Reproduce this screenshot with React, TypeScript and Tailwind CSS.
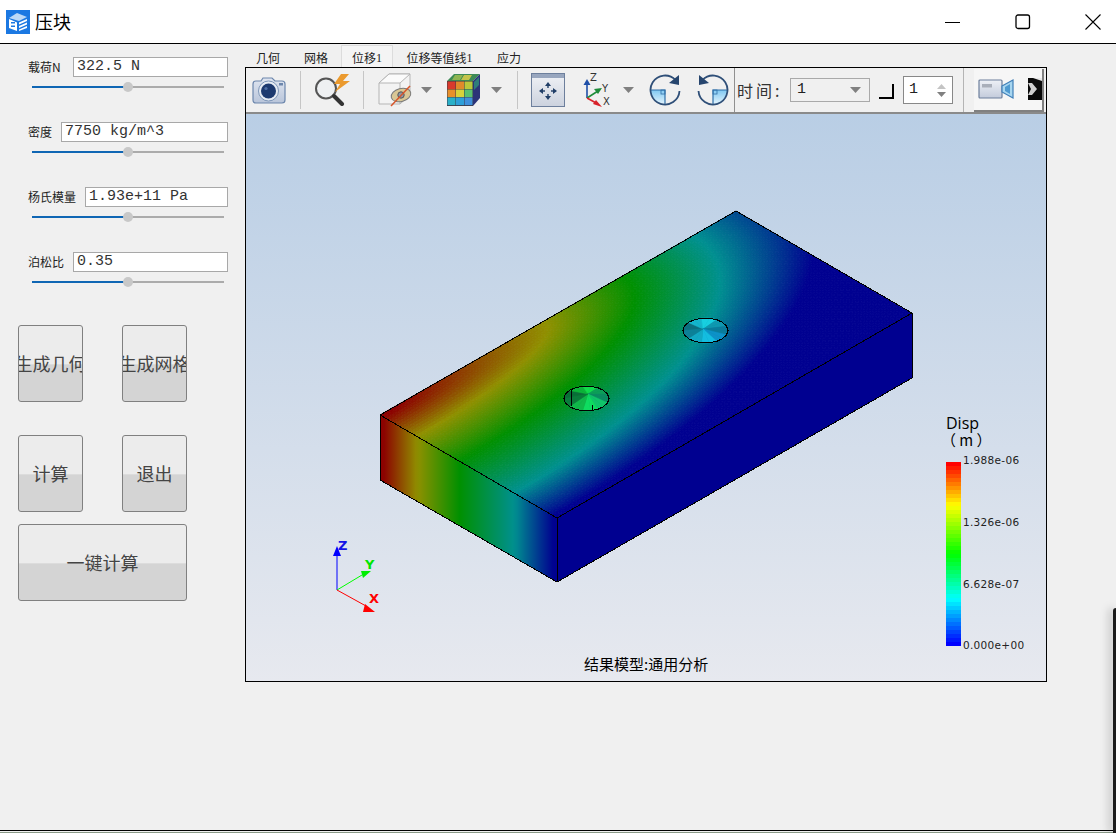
const SANS = "[font-family:'Noto_Sans_CJK_SC','Liberation_Sans',sans-serif]";

const fields = [
  { label: "载荷N", labelW: "w-[45px]", value: "322.5 N" },
  { label: "密度", labelW: "w-[33px]", value: "7750 kg/m^3" },
  { label: "杨氏模量", labelW: "w-[57px]", value: "1.93e+11 Pa" },
  { label: "泊松比", labelW: "w-[45px]", value: "0.35" },
];

const tabs = [
  { name: "几何", cls: "ml-[11px] w-[24px]" },
  { name: "网格", cls: "ml-[24px] w-[24px]" },
  { name: "位移", num: "1", active: true, cls: "ml-[13px] w-[52px]" },
  { name: "位移等值线", num: "1", cls: "ml-[14px] w-[65px]" },
  { name: "应力", cls: "ml-[25px] w-[24px]" },
];

// color ramp of the result plot, dark rainbow
const RAMP = [
  [140, 0, 0],
  [144, 144, 0],
  [0, 144, 0],
  [0, 144, 144],
  [0, 0, 144],
];
const AX = [0.05, 0.46, 0.68, 0.88, 1.12];
const BX = [0.02, 0.21, 0.45, 0.76, 0.98];

const mix = (arr: number[], t: number) => {
  const i = Math.min(Math.floor(t), arr.length - 2);
  return arr[i] + (arr[i + 1] - arr[i]) * (t - i);
};

const radius = (u: number, v: number, t: number) =>
  Math.hypot(u / mix(AX, t), v / mix(BX, t));

const fieldAt = (u: number, v: number) => {
  if (radius(u, v, 4) > 1) return 4;
  if (radius(u, v, 0) < 1) return 0;
  let lo = 0;
  let hi = 4;
  for (let i = 0; i < 14; i++) {
    const m = (lo + hi) / 2;
    if (radius(u, v, m) > 1) lo = m;
    else hi = m;
  }
  return lo;
};

const rampColor = (t: number) => {
  const i = Math.min(Math.floor(t), 3);
  const f = t - i;
  const c = RAMP[i].map((a, k) => Math.round(a + (RAMP[i + 1][k] - a) * f));
  return `rgb(${c[0]},${c[1]},${c[2]})`;
};

const legendColor = (p: number) => {
  const stops: [number, number[]][] = [
    [0, [255, 0, 0]],
    [0.23, [255, 255, 0]],
    [0.5, [0, 255, 0]],
    [0.75, [0, 255, 255]],
    [1, [0, 0, 255]],
  ];
  let i = 0;
  while (i < 3 && p > stops[i + 1][0]) i++;
  const f = (p - stops[i][0]) / (stops[i + 1][0] - stops[i][0]);
  const c = stops[i][1].map((a, k) => Math.round(a + (stops[i + 1][1][k] - a) * f));
  return `rgb(${c[0]},${c[1]},${c[2]})`;
};

const ring = (cx: number, cy: number) =>
  Array.from({ length: 18 }, (_, k) => {
    const a = Math.PI + (k * Math.PI) / 9;
    return [Math.round((cx + 22.5 * Math.cos(a)) * 10) / 10, Math.round((cy + 12.5 * Math.sin(a)) * 10) / 10];
  });

function Plate() {
  const cols = 120;
  const rows = 60;
  const pt = (u: number, v: number) => [380 + 356 * u + 177 * v, 415 - 204 * u + 103 * v];
  const cells = [];
  for (let i = 0; i < cols; i++) {
    for (let j = 0; j < rows; j++) {
      const u0 = i / cols;
      const u1 = (i + 1) / cols;
      const v0 = j / rows;
      const v1 = (j + 1) / rows;
      const color = rampColor(fieldAt((u0 + u1) / 2, (v0 + v1) / 2));
      const p = [pt(u0, v0), pt(u1, v0), pt(u1, v1), pt(u0, v1)].map((q) => q.join(",")).join(" ");
      cells.push(<polygon key={`${i}-${j}`} points={p} fill={color} stroke={color} strokeWidth="0.8" />);
    }
  }
  const sideStops = Array.from({ length: 41 }, (_, k) => (
    <stop key={k} offset={k / 40} stopColor={rampColor(fieldAt(0, k / 40))} />
  ));
  const fan = (pts: number[][], apex: number[], colors: string[]) =>
    pts.map((q, i) => {
      const n = pts[(i + 1) % pts.length];
      const c = colors[Math.floor(i / 2)];
      return (
        <polygon
          key={i}
          points={`${q[0]},${q[1]} ${n[0]},${n[1]} ${apex[0]},${apex[1]}`}
          fill={c}
          stroke={c}
          strokeWidth="0.5"
        />
      );
    });
  const hole1 = ring(586.5, 398.5);
  const hole2 = ring(705.5, 330.5);
  return (
    <svg viewBox="246 114 800 567" className="absolute inset-0 h-full w-full">
      <defs>
        <linearGradient id="sideFace" gradientUnits="userSpaceOnUse" x1="380" y1="0" x2="557" y2="0">
          {sideStops}
        </linearGradient>
      </defs>
      {cells}
      <polygon points="380,415 557,518 557,582 380,480" fill="url(#sideFace)" />
      <polygon points="557,518 912,313 912,378 557,582" fill="#000090" shapeRendering="crispEdges" />
      {fan(hole1, [588, 394], ["#0a6e38", "#0cb43a", "#12dc4c", "#0d9f58", "#0b8c62", "#10c46a", "#0fdc60", "#10b84a", "#0b7c3c"])}
      {fan(hole2, [703, 329], ["#0c6f80", "#14b4cc", "#18cfe0", "#0f98b0", "#0a7c9c", "#0d92c8", "#14bde0", "#12a8c4", "#0d8098"])}
      <g fill="none" stroke="#000" strokeWidth="1" shapeRendering="crispEdges">
        <polygon points="380,415 736,211 912,313 557,518" />
        <polyline points="380,415 380,480 557,582 912,378 912,313" />
        <line x1="557" y1="518" x2="557" y2="582" />
        <polygon points={hole1.map((q) => q.join(",")).join(" ")} />
        <polygon points={hole2.map((q) => q.join(",")).join(" ")} />
        <line x1="571" y1="389" x2="571" y2="406" />
        <line x1="592" y1="405" x2="592" y2="411" />
      </g>
      {/* axis triad */}
      <line x1="337" y1="590" x2="337" y2="552" stroke="#0000ff" strokeWidth="1" />
      <polygon points="337,546 333,556 341,556" fill="#0000ff" />
      <line x1="337" y1="590" x2="362" y2="575" stroke="#00ff00" strokeWidth="1" />
      <polygon points="371,571 361,571 363,578" fill="#00ee00" />
      <line x1="337" y1="590" x2="366" y2="606" stroke="#ff0000" strokeWidth="1" />
      <polygon points="375,612 365,604 363,612" fill="#ff0000" />
      <text x="338" y="550" fill="#1414e6" fontSize="13" fontWeight="700" fontFamily="'DejaVu Sans',sans-serif">Z</text>
      <text x="365" y="569" fill="#00e600" fontSize="13" fontWeight="700" fontFamily="'DejaVu Sans',sans-serif">Y</text>
      <text x="369" y="603" fill="#ff0000" fontSize="13" fontWeight="700" fontFamily="'DejaVu Sans',sans-serif">X</text>
    </svg>
  );
}

function Sep({ className = "" }: { className?: string }) {
  return <div className={`h-[38px] w-px bg-[#c6c6c6] ${className}`} />;
}

function Caret({ className = "" }: { className?: string }) {
  return (
    <svg width="11" height="6" viewBox="0 0 11 6" className={className}>
      <polygon points="0,0 11,0 5.5,6" fill="#808080" />
    </svg>
  );
}

function CameraIcon() {
  return (
    <svg width="34" height="28" viewBox="0 0 34 28" className="ml-[6px]">
      <defs>
        <linearGradient id="cam" x1="0" y1="0" x2="0" y2="1">
          <stop offset="0" stopColor="#dfe5f0" />
          <stop offset="1" stopColor="#b9c5da" />
        </linearGradient>
      </defs>
      <path d="M1 8q0-3 3-3h5l2-3h9l3 3h7q3 0 3 3v16q0 3-3 3H4q-3 0-3-3z" fill="url(#cam)" stroke="#6c86ac" strokeWidth="1.2" />
      <rect x="27" y="7" width="4" height="2.5" fill="#6c86ac" />
      <circle cx="16.5" cy="15" r="10" fill="#e6ebf3" stroke="#7f97b8" />
      <circle cx="16.5" cy="15" r="7.5" fill="#1d3a70" />
      <circle cx="14" cy="12.5" r="1.6" fill="#4e6ea4" />
    </svg>
  );
}

function ZoomIcon() {
  return (
    <svg width="36" height="32" viewBox="0 0 36 32" className="ml-[14px]">
      <circle cx="11" cy="14.5" r="10" fill="#eef0f2" stroke="#555" strokeWidth="2" />
      <line x1="19" y1="22" x2="27" y2="30" stroke="#333" strokeWidth="4" strokeLinecap="round" />
      <polygon points="26,0 19,10 25,10 20,18 35,7 28,7 34,0" fill="#eb9a2e" />
    </svg>
  );
}

function BoxIcon() {
  return (
    <svg width="34" height="35" viewBox="0 0 34 35" className="ml-[14px]">
      <polygon points="1,10 11,1 32,1 32,22 22,31 1,31" fill="#f3f3f3" stroke="#b5b5b5" />
      <polygon points="1,10 11,1 32,1 22,10" fill="#fbfbfb" stroke="#b5b5b5" />
      <line x1="22" y1="10" x2="22" y2="31" stroke="#b5b5b5" />
      <ellipse cx="23" cy="22" rx="10" ry="6.5" fill="#d9c795" stroke="#7a7a7a" transform="rotate(-15 23 22)" />
      <circle cx="23" cy="22" r="3.2" fill="#8d99a8" stroke="#555" />
      <line x1="13" y1="33" x2="32" y2="13" stroke="#d8562a" strokeWidth="1.5" />
    </svg>
  );
}

function CubeIcon() {
  const front = ["#d93a2c", "#e08a2a", "#b9c83a", "#e8902a", "#d8d23a", "#58c070", "#2ab0c8", "#2e9fd8", "#3f8fdc"];
  return (
    <svg width="33" height="32" viewBox="0 0 33 32" className="ml-[15px]">
      <polygon points="0,7 7,0 33,0 26,7" fill="#3d8a55" />
      <polygon points="8,1 16,1 13,6 5,6" fill="#8fb552" />
      <polygon points="17,1 25,1 22,6 14,6" fill="#c4c44c" />
      <polygon points="26,7 33,0 33,24 26,32" fill="#2c3478" />
      <polygon points="27,8 32,3 32,11 27,16" fill="#2f7d7a" />
      <rect x="0" y="7" width="26" height="25" fill="#3b3b4a" />
      {front.map((c, i) => (
        <rect key={i} x={0.5 + (i % 3) * 8.5} y={7.5 + Math.floor(i / 3) * 8} width="8" height="7.6" fill={c} />
      ))}
    </svg>
  );
}

function FitIcon() {
  return (
    <svg width="34" height="34" viewBox="0 0 34 34" className="ml-[13px]">
      <defs>
        <linearGradient id="fit" x1="0" y1="0" x2="0" y2="1">
          <stop offset="0" stopColor="#f0f2f6" />
          <stop offset="1" stopColor="#ccd2de" />
        </linearGradient>
      </defs>
      <rect x="0.5" y="0.5" width="33" height="33" fill="url(#fit)" stroke="#6d7f9c" />
      <rect x="1" y="1" width="32" height="4" fill="#98a6be" />
      <g stroke="#1f3d66" strokeWidth="1.4">
        <line x1="17" y1="11" x2="17" y2="15" />
        <line x1="17" y1="21" x2="17" y2="25" />
        <line x1="10" y1="18" x2="14" y2="18" />
        <line x1="20" y1="18" x2="24" y2="18" />
      </g>
      <g fill="#1f3d66">
        <polygon points="17,9 14,13 20,13" />
        <polygon points="17,27 14,23 20,23" />
        <polygon points="8,18 12,15 12,21" />
        <polygon points="26,18 22,15 22,21" />
      </g>
    </svg>
  );
}

function AxesIcon() {
  return (
    <svg width="30" height="36" viewBox="0 0 30 36" className="ml-[18px]">
      <line x1="4" y1="26" x2="4" y2="12" stroke="#1f4fa8" strokeWidth="1.6" />
      <polygon points="4,7 0.5,13 7.5,13" fill="#1f4fa8" />
      <line x1="4" y1="26" x2="15" y2="19" stroke="#1e8c3a" strokeWidth="1.6" />
      <polygon points="19,16 11,17 15,22" fill="#1e8c3a" />
      <line x1="4" y1="26" x2="15" y2="32" stroke="#d8222a" strokeWidth="1.6" />
      <polygon points="19,35 10,32 13,28" fill="#d8222a" />
      <g fill="#333" fontSize="10" fontFamily="'DejaVu Sans',sans-serif">
        <text x="7" y="9">Z</text>
        <text x="19" y="20">Y</text>
        <text x="20" y="33">X</text>
      </g>
    </svg>
  );
}

function RotateIcon({ flip, className = "" }: { flip?: boolean; className?: string }) {
  return (
    <svg width="32" height="32" viewBox="0 0 32 32" className={`${flip ? "-scale-x-100" : ""} ${className}`}>
      <defs>
        <linearGradient id="rot" x1="0" y1="0" x2="0" y2="1">
          <stop offset="0" stopColor="#7fc8f2" />
          <stop offset="1" stopColor="#e6f5fd" />
        </linearGradient>
      </defs>
      <path d="M16 16H1.5A14.5 14.5 0 0 0 16 30.5z" fill="url(#rot)" />
      <path d="M1.5 16H16V30" fill="none" stroke="#2f6fa8" strokeWidth="1.2" />
      <rect x="12" y="16" width="4" height="4" fill="none" stroke="#2f6fa8" strokeWidth="0.8" />
      <path d="M26.5 6A14.5 14.5 0 1 0 30.5 17" fill="none" stroke="#2f4f78" strokeWidth="1.8" />
      <polygon points="30,1 30,11 20,9" fill="#26456e" />
    </svg>
  );
}

function VideoIcon() {
  return (
    <svg width="36" height="20" viewBox="0 0 36 20">
      <defs>
        <linearGradient id="vid" x1="0" y1="0" x2="0" y2="1">
          <stop offset="0" stopColor="#eef1f6" />
          <stop offset="1" stopColor="#c3cbdb" />
        </linearGradient>
      </defs>
      <rect x="1" y="1" width="23" height="18" rx="1" fill="url(#vid)" stroke="#6d7f9c" strokeWidth="1.2" />
      <rect x="4" y="5" width="10" height="3.5" fill="#a9afba" />
      <polygon points="24,7 35,1 35,19 24,13" fill="#a8d6f0" stroke="#3f7fb8" strokeWidth="1.2" />
      <polygon points="27,8 32,5 32,15 27,12" fill="#4f9ad0" />
    </svg>
  );
}

function ChevronBlock() {
  return (
    <svg width="14" height="22" viewBox="0 0 14 22" className="ml-[14px] blur-[0.5px]">
      <rect width="14" height="22" fill="#0a0a0a" />
      <polygon points="5,0 14,0 14,3" fill="#e8e8e8" />
      <polygon points="0,5 4,5 9,11 4,17 0,17 3,11" fill="#cfcfcf" />
    </svg>
  );
}

function Logo() {
  return (
    <svg width="24" height="24" viewBox="0 0 24 24" className="ml-[6px]">
      <rect width="24" height="24" fill="#1b78e2" />
      <polygon points="3,8 11,3 21,7 13,11" fill="#bcd9f7" />
      <polygon points="3,9 11,12.5 11,21 3,18" fill="#ffffff" />
      <rect x="5" y="12" width="4" height="1.5" fill="#1b78e2" />
      <rect x="5" y="15.5" width="4" height="1.5" fill="#1b78e2" />
      <polygon points="13,12.5 21,9 21,11 13,14.5" fill="#ffffff" />
      <polygon points="13,16 21,12.5 21,14.5 13,18" fill="#ffffff" />
      <polygon points="13,19.5 21,16 21,18 13,21" fill="#ffffff" />
    </svg>
  );
}

function SimButton({ text, className = "w-[65px]" }: { text: string; className?: string }) {
  return (
    <button
      className={`flex h-[77px] items-center justify-center overflow-hidden whitespace-nowrap rounded-[3px] border border-[#808080] bg-[linear-gradient(to_bottom,#ececec_0%,#ececec_50%,#d4d4d4_52%,#d4d4d4_100%)] text-[18px] text-[#444] ${className}`}
    >
      {text}
    </button>
  );
}

export default function App() {
  const legend = Array.from({ length: 46 }, (_, i) => legendColor(i / 45));
  return (
    <div className={`relative h-[833px] w-[1116px] overflow-hidden bg-[#f0f0f0] ${SANS}`}>
      <header className="flex h-[44px] items-center border-b border-black bg-white">
        <Logo />
        <span className="ml-[5px] text-[18px] text-black">压块</span>
        <svg width="16" height="16" viewBox="0 0 16 16" className="ml-[874px]">
          <line x1="0" y1="8.5" x2="15" y2="8.5" stroke="#000" />
        </svg>
        <svg width="16" height="16" viewBox="0 0 16 16" className="ml-[54px]">
          <rect x="1" y="1" width="13.5" height="13.5" rx="2" fill="none" stroke="#000" strokeWidth="1.3" />
        </svg>
        <svg width="16" height="16" viewBox="0 0 16 16" className="ml-[54px]">
          <path d="M0.5 0.5L15.5 15.5M15.5 0.5L0.5 15.5" stroke="#000" strokeWidth="1.1" />
        </svg>
      </header>

      <div className="flex">
        <aside className="w-[245px] shrink-0 pt-[13px]">
          {fields.map((f) => (
            <div key={f.label} className="mb-[30px] pl-[28px]">
              <div className="flex h-[20px] w-[200px] items-center">
                <span className={`text-[12px] text-[#222] ${f.labelW}`}>{f.label}</span>
                <div className="flex h-[20px] flex-1 items-center border border-[#a8a8a8] bg-white pl-[3px] [font-family:'Liberation_Mono','Noto_Sans_CJK_SC',monospace] text-[15px] text-[#333]">
                  {f.value}
                </div>
              </div>
              <div className="relative ml-[4px] mt-[5px] flex h-[10px] w-[192px] items-center">
                <div className="h-[2px] w-[96px] bg-[#0f66b4]" />
                <div className="h-[2px] w-[96px] bg-[#ababab]" />
                <div className="absolute left-[91px] top-0 h-[10px] w-[10px] rounded-full bg-[#c8c8c8]" />
              </div>
            </div>
          ))}

          <div className="pl-[18px] pt-[8px]">
            <div className="flex gap-[39px]">
              <SimButton text="生成几何" />
              <SimButton text="生成网格" />
            </div>
            <div className="mt-[33px] flex gap-[39px]">
              <SimButton text="计算" />
              <SimButton text="退出" />
            </div>
            <SimButton text="一键计算" className="mt-[12px] w-[169px]" />
          </div>
        </aside>

        <main className="w-[802px]">
          <nav className="flex h-[23px] items-end text-[12px] text-[#222]">
            {tabs.map((t) => (
              <div
                key={t.name}
                className={`flex h-[22px] items-center justify-center whitespace-nowrap pt-[3px] ${t.cls} ${
                  t.active ? "border-x border-t border-[#dcdcdc] bg-[#f4f4f4]" : ""
                }`}
              >
                {t.name}
                {t.num && <span className="[font-family:'Liberation_Serif',serif]">{t.num}</span>}
              </div>
            ))}
          </nav>

          <section className="h-[615px] border border-black">
            <div className="flex h-[46px] items-center border-b-2 border-[#8a8a8a]">
              <CameraIcon />
              <Sep className="ml-[14px]" />
              <ZoomIcon />
              <Sep className="ml-[12px]" />
              <BoxIcon />
              <Caret className="ml-[9px]" />
              <CubeIcon />
              <Caret className="ml-[11px]" />
              <Sep className="ml-[15px]" />
              <FitIcon />
              <AxesIcon />
              <Caret className="ml-[10px]" />
              <RotateIcon className="ml-[15px]" />
              <RotateIcon flip className="ml-[16px]" />
              <div className="ml-[5px] h-full w-px bg-[#909090]" />
              <span className="ml-[2px] w-[43px] whitespace-nowrap text-[16px] tracking-[3px] text-[#333]">时间:</span>
              <div className="ml-[10px] flex h-[24px] w-[80px] items-center justify-between border border-[#a9a9a9] pl-[6px] pr-[8px] [font-family:'Liberation_Mono',monospace] text-[15px] text-[#222]">
                1
                <Caret />
              </div>
              <div className="ml-[9px] mt-[2px] h-[15px] w-[15px] border-b-2 border-r-2 border-black" />
              <div className="ml-[9px] flex h-[28px] w-[50px] items-center justify-between border border-[#888] bg-white pl-[5px] pr-[6px] [font-family:'Liberation_Mono',monospace] text-[15px] text-[#222]">
                1
                <div className="flex flex-col gap-[3px]">
                  <svg width="9" height="5" viewBox="0 0 9 5"><polygon points="4.5,0 9,5 0,5" fill="#c4c4c4" /></svg>
                  <svg width="9" height="5" viewBox="0 0 9 5"><polygon points="0,0 9,0 4.5,5" fill="#808080" /></svg>
                </div>
              </div>
              <div className="ml-[10px] h-full w-px bg-[#b4b4b4]" />
              <div className="ml-[10px] flex h-[43px] w-[70px] items-center border-b-2 border-r-2 border-[#808080] bg-[#f6f6f6] pl-[4px]">
                <VideoIcon />
                <ChevronBlock />
              </div>
            </div>

            <div className="relative h-[567px] bg-gradient-to-b from-[#b9cee5] to-[#e7e9ef]">
              <Plate />
              <div className="absolute left-[700px] top-[301px] text-[16px] leading-[16px] text-black [font-family:'Open_Sans',sans-serif]">Disp</div>
              <div className="absolute left-[695px] top-[318px] whitespace-pre text-[15px] leading-[16px] text-black">（ m ）</div>
              <div className="absolute left-[700px] top-[348px] flex h-[184px] w-[15px] flex-col">
                {legend.map((c, i) => (
                  <div key={i} className="flex-1" style={{ backgroundColor: c }} />
                ))}
              </div>
              {[
                ["1.988e-06", "top-[340px]"],
                ["1.326e-06", "top-[402px]"],
                ["6.628e-07", "top-[464px]"],
                ["0.000e+00", "top-[525px]"],
              ].map(([v, pos]) => (
                <div key={v} className={`absolute left-[717px] text-[10.5px] leading-[12px] tracking-[0.3px] text-[#222] [font-family:'DejaVu_Sans',sans-serif] ${pos}`}>
                  {v}
                </div>
              ))}
              <div className="absolute left-[338px] top-[540px] whitespace-nowrap text-[15px] leading-[20px] text-black">结果模型:通用分析</div>
            </div>
          </section>
        </main>
      </div>

      {/* neighbouring window peeking in at the right and bottom */}
      <div className="absolute bottom-[2px] left-0 h-[1px] w-[1113px] bg-black" />
      <div className="absolute bottom-0 left-0 h-[1px] w-[1113px] bg-[#8a9a88]" />
      <div className="absolute left-[1113px] top-[608px] h-[225px] w-[3px] rounded-tl-[3px] bg-[#1c1c1c] shadow-[-3px_0_8px_rgba(0,0,0,0.35)]" />
    </div>
  );
}
